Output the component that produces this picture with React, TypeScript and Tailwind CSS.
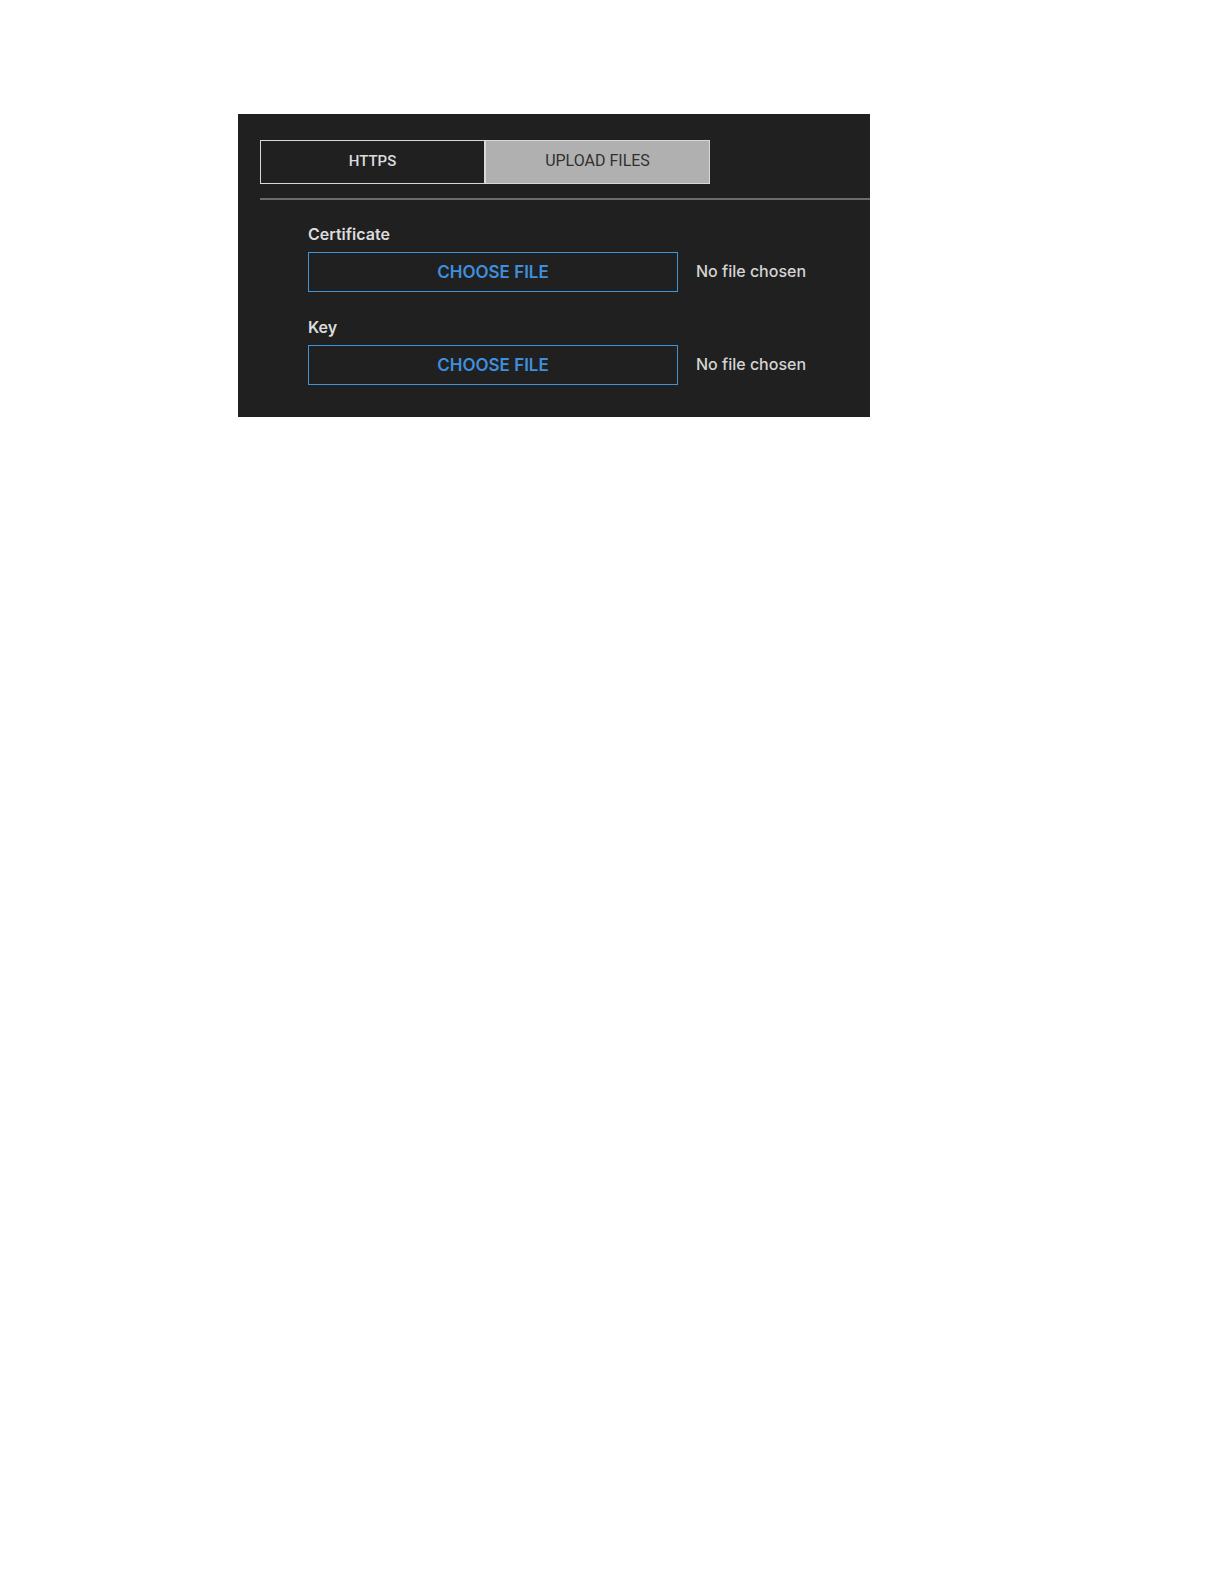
import React, { useRef, useState } from 'react';

type Tab = 'https' | 'upload';

interface FileFieldProps {
  id: string;
  label: string;
}

const tabs: { id: Tab; label: string }[] = [
  { id: 'https', label: 'HTTPS' },
  { id: 'upload', label: 'UPLOAD FILES' },
];

const FileField: React.FC<FileFieldProps> = ({ id, label }) => {
  const inputRef = useRef<HTMLInputElement>(null);
  const [fileName, setFileName] = useState('');

  return (
    <div>
      <label htmlFor={id} className="block text-[16px] leading-5 font-semibold text-[#dcdcdc]">
        {label}
      </label>
      <input
        ref={inputRef}
        id={id}
        type="file"
        className="hidden"
        onChange={(e) => setFileName(e.target.files?.[0]?.name || '')}
      />
      <div className="mt-2 flex items-center gap-[18px]">
        <button
          type="button"
          onClick={() => inputRef.current?.click()}
          className="h-10 w-full max-w-[370px] border border-[#4095d6] text-[17px] leading-5 font-semibold text-[#3f8fdc]"
        >
          CHOOSE FILE
        </button>
        <span className="shrink-0 pb-0.5 text-[16px] leading-5 font-medium text-[#d4d4d4]">
          {fileName || 'No file chosen'}
        </span>
      </div>
    </div>
  );
};

const App: React.FC = () => {
  const [activeTab, setActiveTab] = useState<Tab>('upload');

  return (
    <div className="grid min-h-screen grid-cols-[238fr_632fr_354fr] items-start bg-white pt-[114px] font-['Inter',sans-serif]">
      <main className="col-start-2 bg-[#202020] pt-[26px] pb-8 pl-[22px]">
        <div className="flex max-w-[450px] font-['Roboto',sans-serif]">
          {tabs.map((tab) => (
            <button
              key={tab.id}
              type="button"
              aria-pressed={activeTab === tab.id}
              onClick={() => setActiveTab(tab.id)}
              className={`h-11 flex-1 border border-[#d8d8d8] pb-0.5 leading-5 ${
                activeTab === tab.id
                  ? 'bg-[#b0b0b0] text-[16px] text-[#303030]'
                  : 'text-[15px] font-medium text-[#dcdcdc]'
              }`}
            >
              {tab.label}
            </button>
          ))}
        </div>

        <hr className="mt-[14px] border-t-2 border-[#6c6c6c]" />

        {/* Certificate and key pickers */}
        <div className="mt-6 flex flex-col gap-[25px] pl-12">
          <FileField id="certificate" label="Certificate" />
          <FileField id="key" label="Key" />
        </div>
      </main>
    </div>
  );
};

export default App;
